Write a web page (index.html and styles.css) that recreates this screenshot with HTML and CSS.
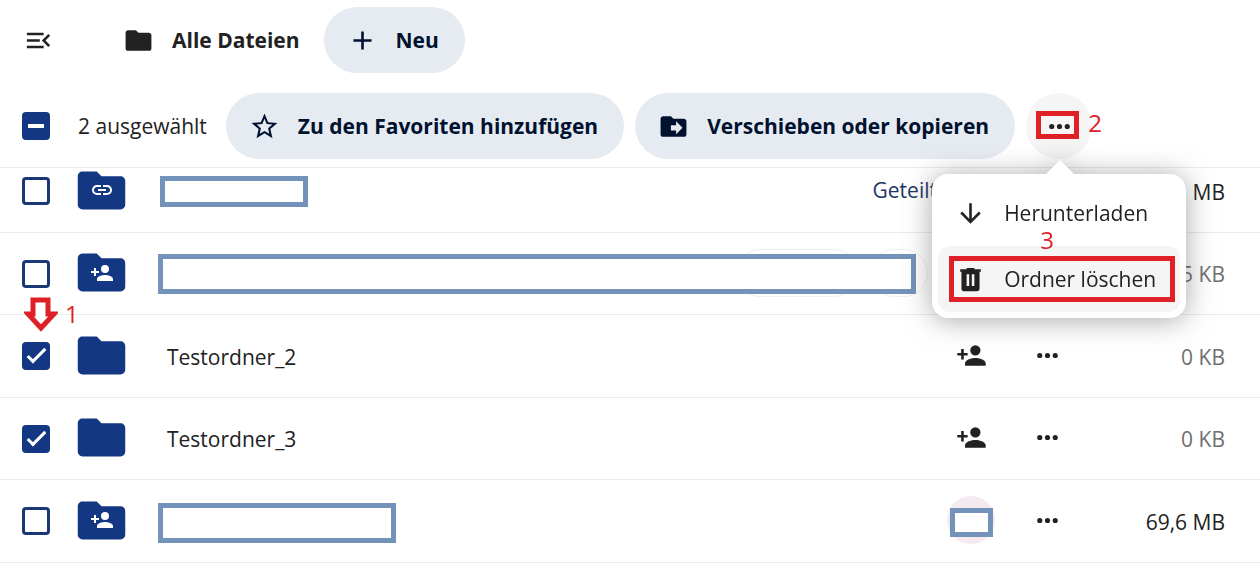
FILE: index.html
```html
<!DOCTYPE html>
<html lang="de">
<head>
  <meta charset="UTF-8">
  <title>Alle Dateien</title>
  <link rel="stylesheet" href="styles.css">
</head>
<body>

<!-- Icons -->
<svg class="sprite" aria-hidden="true">
  <symbol id="menu-open" viewBox="0 0 24 24"><path d="M21,15.61L19.59,17L14.58,12L19.59,7L21,8.39L17.44,12L21,15.61M3,6H16V8H3V6M3,13V11H13V13H3M3,18V16H16V18H3Z"/></symbol>
  <symbol id="folder" viewBox="0 0 24 24"><path d="M10,4H4C2.89,4 2,4.89 2,6V18A2,2 0 0,0 4,20H20A2,2 0 0,0 22,18V8C22,6.89 21.1,6 20,6H12L10,4Z"/></symbol>
  <symbol id="plus" viewBox="0 0 24 24"><path d="M19,13H13V19H11V13H5V11H11V5H13V11H19V13Z"/></symbol>
  <symbol id="star" viewBox="0 0 24 24"><path d="M12,15.39L8.24,17.66L9.23,13.38L5.91,10.5L10.29,10.13L12,6.09L13.71,10.13L18.09,10.5L14.77,13.38L15.76,17.66M22,9.24L14.81,8.63L12,2L9.19,8.63L2,9.24L7.45,13.97L5.82,21L12,17.27L18.18,21L16.54,13.97L22,9.24Z"/></symbol>
  <symbol id="folder-move" viewBox="0 0 24 24"><path d="M14,18V15H10V11H14V8L19,13M20,6H12L10,4H4C2.89,4 2,4.89 2,6V18A2,2 0 0,0 4,20H20A2,2 0 0,0 22,18V8C22,6.89 21.1,6 20,6Z"/></symbol>
  <symbol id="dots" viewBox="0 0 24 24"><path d="M16,12A2,2 0 0,1 18,10A2,2 0 0,1 20,12A2,2 0 0,1 18,14A2,2 0 0,1 16,12M10,12A2,2 0 0,1 12,10A2,2 0 0,1 14,12A2,2 0 0,1 12,14A2,2 0 0,1 10,12M4,12A2,2 0 0,1 6,10A2,2 0 0,1 8,12A2,2 0 0,1 6,14A2,2 0 0,1 4,12Z"/></symbol>
  <symbol id="arrow-down" viewBox="0 0 24 24"><path d="M11,4H13V16L18.5,10.5L19.92,11.92L12,19.84L4.08,11.92L5.5,10.5L11,16V4Z"/></symbol>
  <symbol id="trash" viewBox="0 0 24 24"><path fill-rule="evenodd" d="M9,3V4H4V6H5V19A2,2 0 0,0 7,21H17A2,2 0 0,0 19,19V6H20V4H15V3H9M9,8H11V17H9V8M13,8H15V17H13V8Z"/></symbol>
  <symbol id="link" viewBox="0 0 24 24"><path d="M3.9,12C3.9,10.29 5.29,8.9 7,8.9H11V7H7A5,5 0 0,0 2,12A5,5 0 0,0 7,17H11V15.1H7C5.29,15.1 3.9,13.71 3.9,12M8,13H16V11H8V13M17,7H13V8.9H17C18.71,8.9 20.1,10.29 20.1,12C20.1,13.71 18.71,15.1 17,15.1H13V17H17A5,5 0 0,0 22,12A5,5 0 0,0 17,7Z"/></symbol>
  <symbol id="account-plus" viewBox="0 0 24 24"><path d="M15,14C12.33,14 7,15.33 7,18V20H23V18C23,15.33 17.67,14 15,14M6,10V7H4V10H1V12H4V15H6V12H9V10M15,12A4,4 0 0,0 19,8A4,4 0 0,0 15,4A4,4 0 0,0 11,8A4,4 0 0,0 15,12Z"/></symbol>
</svg>

<header class="files-header">
  <div class="crumbs">
    <button class="nav-toggle" aria-label="Navigation"><svg class="icon"><use href="#menu-open"/></svg></button>
    <a class="crumb" href="#"><svg class="icon"><use href="#folder"/></svg>Alle Dateien</a>
    <button class="pill"><svg class="icon"><use href="#plus"/></svg>Neu</button>
  </div>

  <div class="selection">
    <div class="check-col"><input type="checkbox" id="all" class="check partial"></div>
    <label class="count" for="all">2 ausgewählt</label>
    <button class="pill"><svg class="icon"><use href="#star"/></svg>Zu den Favoriten hinzufügen</button>
    <button class="pill"><svg class="icon"><use href="#folder-move"/></svg>Verschieben oder kopieren</button>

    <div class="more">
      <button class="more-button" aria-label="Aktionen"><svg class="icon"><use href="#dots"/></svg></button>
      <span class="mark mark-more"></span>
      <span class="step step-2">2</span>

      <div class="popover">
        <button class="menu-item"><svg class="icon"><use href="#arrow-down"/></svg>Herunterladen</button>
        <button class="menu-item active"><svg class="icon"><use href="#trash"/></svg>Ordner löschen</button>
        <span class="mark mark-delete"></span>
        <span class="step step-3">3</span>
      </div>
    </div>
  </div>
</header>

<table class="files">
  <colgroup>
    <col class="col-check">
    <col class="col-icon">
    <col>
    <col class="col-share">
    <col class="col-more">
    <col class="col-size">
  </colgroup>
  <tbody>
    <tr>
      <td class="center"><input type="checkbox" class="check" aria-label="Auswählen"></td>
      <td><span class="folder"><svg class="folder-shape"><use href="#folder"/></svg><svg class="folder-badge"><use href="#link"/></svg></span></td>
      <td><div class="redacted redacted-small"></div></td>
      <td><div class="share"><a class="shared" href="#">Geteilt</a><button class="icon-button" aria-label="Teilen"><svg class="icon"><use href="#account-plus"/></svg></button></div></td>
      <td><button class="icon-button" aria-label="Aktionen"><svg class="icon"><use href="#dots"/></svg></button></td>
      <td class="size">3 MB</td>
    </tr>
    <tr>
      <td class="center"><input type="checkbox" class="check" aria-label="Auswählen"></td>
      <td><span class="folder"><svg class="folder-shape"><use href="#folder"/></svg><svg class="folder-badge"><use href="#account-plus"/></svg></span></td>
      <td colspan="2">
        <div class="tags">
          <span class="tag tag-wide"></span>
          <span class="tag"></span>
          <div class="redacted redacted-full"></div>
        </div>
      </td>
      <td><button class="icon-button" aria-label="Aktionen"><svg class="icon"><use href="#dots"/></svg></button></td>
      <td class="size light">5 KB</td>
    </tr>
    <tr>
      <td class="center">
        <div class="step-anchor">
          <input type="checkbox" class="check" id="f2" checked>
          <svg class="step-arrow" viewBox="0 0 34 35"><path d="M9 3H24V17H30L17 31L4 17H9Z"/></svg>
          <span class="step step-1">1</span>
        </div>
      </td>
      <td><span class="folder"><svg class="folder-shape"><use href="#folder"/></svg></span></td>
      <td class="name"><label for="f2">Testordner_2</label></td>
      <td><div class="share"><button class="icon-button" aria-label="Teilen"><svg class="icon"><use href="#account-plus"/></svg></button></div></td>
      <td><button class="icon-button" aria-label="Aktionen"><svg class="icon"><use href="#dots"/></svg></button></td>
      <td class="size light">0 KB</td>
    </tr>
    <tr>
      <td class="center"><input type="checkbox" class="check" id="f3" checked></td>
      <td><span class="folder"><svg class="folder-shape"><use href="#folder"/></svg></span></td>
      <td class="name"><label for="f3">Testordner_3</label></td>
      <td><div class="share"><button class="icon-button" aria-label="Teilen"><svg class="icon"><use href="#account-plus"/></svg></button></div></td>
      <td><button class="icon-button" aria-label="Aktionen"><svg class="icon"><use href="#dots"/></svg></button></td>
      <td class="size light">0 KB</td>
    </tr>
    <tr>
      <td class="center"><input type="checkbox" class="check" aria-label="Auswählen"></td>
      <td><span class="folder"><svg class="folder-shape"><use href="#folder"/></svg><svg class="folder-badge"><use href="#account-plus"/></svg></span></td>
      <td><div class="redacted redacted-name"></div></td>
      <td><div class="share"><div class="avatar"><div class="redacted redacted-avatar"></div></div></div></td>
      <td><button class="icon-button" aria-label="Aktionen"><svg class="icon"><use href="#dots"/></svg></button></td>
      <td class="size">69,6 MB</td>
    </tr>
  </tbody>
</table>

</body>
</html>
```
FILE: styles.css
```css
*,
*::before {
  box-sizing: border-box;
}
body {
  margin: 0;
  background: #fff;
  color: #222;
  font-family: "Open Sans", "Noto Sans", sans-serif;
  font-size: 21px;
  line-height: 30px;
}
button {
  border: 0;
  padding: 0;
  background: none;
  color: inherit;
  font: inherit;
  cursor: pointer;
}
a {
  color: inherit;
  text-decoration: none;
}
.sprite {
  display: none;
}
.icon {
  width: 31px;
  height: 31px;
  flex: none;
  fill: currentColor;
}

/* header */
.files-header {
  position: relative;
  z-index: 2;
  background: #fff;
  border-bottom: 1px solid #ebebeb;
}
.crumbs {
  display: flex;
  align-items: center;
  padding: 7px 0 13px;
}
.nav-toggle {
  display: flex;
  margin: 0 69px 0 23px;
}
.crumb {
  display: flex;
  align-items: center;
  gap: 18px;
  margin-right: 24px;
  font-weight: 700;
}
.pill {
  display: flex;
  align-items: center;
  gap: 18px;
  height: 66px;
  padding: 0 26px 0 23px;
  border-radius: 33px;
  background: #e6ebf2;
  color: #00122f;
  font-weight: 700;
  white-space: nowrap;
}
.selection {
  display: flex;
  align-items: center;
  gap: 11px;
  padding: 7px 0 8px;
}
.check-col {
  display: flex;
  justify-content: center;
  width: 72px;
  margin-right: -5px;
}
.count {
  margin-right: 8px;
  white-space: nowrap;
}

/* checkboxes */
.check {
  appearance: none;
  display: block;
  position: relative;
  width: 28px;
  height: 28px;
  margin: 0;
  border: 3px solid #1b3876;
  border-radius: 4px;
}
.check:checked,
.check.partial {
  border-color: #133782;
  background: #133782;
}
.check:checked::before {
  content: "";
  position: absolute;
  left: 7px;
  top: -1px;
  width: 9px;
  height: 19px;
  border: solid #fff;
  border-width: 0 3px 3px 0;
  transform: rotate(45deg);
}
.check.partial::before {
  content: "";
  position: absolute;
  left: 3px;
  top: 9px;
  width: 16px;
  height: 4px;
  background: #fff;
}

/* actions menu */
.more {
  position: relative;
}
.more-button {
  display: flex;
  align-items: center;
  justify-content: center;
  width: 66px;
  height: 66px;
  border-radius: 50%;
  background: #f5f5f5;
}
.popover {
  position: absolute;
  top: 81px;
  right: -94px;
  width: 254px;
  padding: 6px;
  border-radius: 16px;
  background: #fff;
  filter: drop-shadow(0 2px 14px rgba(77, 77, 77, 0.5));
}
.popover::before {
  content: "";
  position: absolute;
  top: -14px;
  left: 113px;
  border: solid transparent;
  border-width: 0 15px 15px;
  border-bottom-color: #fff;
}
.menu-item {
  display: flex;
  align-items: center;
  gap: 18px;
  width: 100%;
  height: 66px;
  padding-left: 17px;
  border-radius: 12px;
  white-space: nowrap;
}
.menu-item.active {
  background: #f5f5f5;
}

/* file list, first row is scrolled under the header */
.files {
  width: 100%;
  margin-top: -18px;
  border-collapse: separate;
  border-spacing: 0;
  table-layout: fixed;
}
.col-check {
  width: 72px;
}
.col-icon {
  width: 86px;
}
.col-share {
  width: 139px;
}
.col-more {
  width: 88px;
}
.col-size {
  width: 169px;
}
.files td {
  height: 83px;
  padding: 0 0 2px;
  border-bottom: 1px solid #ebebeb;
  vertical-align: middle;
}
.files tr:nth-child(even) td {
  height: 82px;
}
.files .center {
  padding: 0;
}
.files .center .check {
  margin: 0 auto;
}
.files .name {
  padding: 1px 0 0 9px;
}
.files .size {
  padding: 1px 35px 0 0;
  text-align: right;
}
.files .light {
  color: #6f6f6f;
}
.folder {
  display: grid;
  place-items: center;
  width: 57px;
  margin-left: 1px;
}
.folder > svg {
  grid-area: 1 / 1;
}
.folder-shape {
  width: 57px;
  height: 57px;
  fill: #133782;
}
.folder-badge {
  width: 24px;
  height: 24px;
  fill: #fff;
}
.share {
  display: flex;
  align-items: center;
  justify-content: flex-end;
  gap: 10px;
  padding-right: 8px;
}
.shared {
  color: #1d3566;
}
.icon-button {
  display: flex;
  align-items: center;
  justify-content: center;
  width: 48px;
  height: 48px;
}
td > .icon-button {
  margin: 0 auto;
}
.avatar {
  display: flex;
  align-items: center;
  justify-content: center;
  width: 48px;
  height: 48px;
  border-radius: 50%;
  background: #f6eaf2;
}
.tags {
  position: relative;
  display: flex;
  justify-content: flex-end;
  gap: 12px;
  padding-right: 75px;
}
.tag {
  width: 58px;
  height: 48px;
  border: 1px solid #f0f0f0;
  border-radius: 24px;
}
.tag-wide {
  width: 122px;
}

/* blanked out names */
.redacted {
  border: 5px solid #7393ba;
  background: #fff;
}
.redacted-small {
  width: 148px;
  height: 31px;
  margin: 2px 0 0 2px;
}
.redacted-name {
  width: 238px;
  height: 40px;
  margin-top: 6px;
}
.redacted-full {
  position: absolute;
  left: 0;
  right: 87px;
  top: 5px;
  height: 40px;
}
.redacted-avatar {
  width: 43px;
  height: 29px;
  margin-top: 4px;
  flex: none;
}

/* step marks */
.mark {
  position: absolute;
  border: 5px solid #df2027;
  pointer-events: none;
}
.mark-more {
  left: 10px;
  top: 18px;
  width: 43px;
  height: 28px;
}
.mark-delete {
  left: 17px;
  right: 11px;
  bottom: 16px;
  height: 46px;
}
.step {
  position: absolute;
  color: #df2027;
  font-size: 24px;
  line-height: 20px;
}
.step-anchor {
  position: relative;
}
.step-1 {
  left: 65px;
  top: -38px;
}
.step-2 {
  left: 62px;
  top: 20px;
}
.step-3 {
  left: 108px;
  top: 56px;
}
.step-arrow {
  position: absolute;
  left: 24px;
  top: -45px;
  width: 34px;
  height: 35px;
  fill: #fff;
  stroke: #df2027;
  stroke-width: 5px;
}
```
